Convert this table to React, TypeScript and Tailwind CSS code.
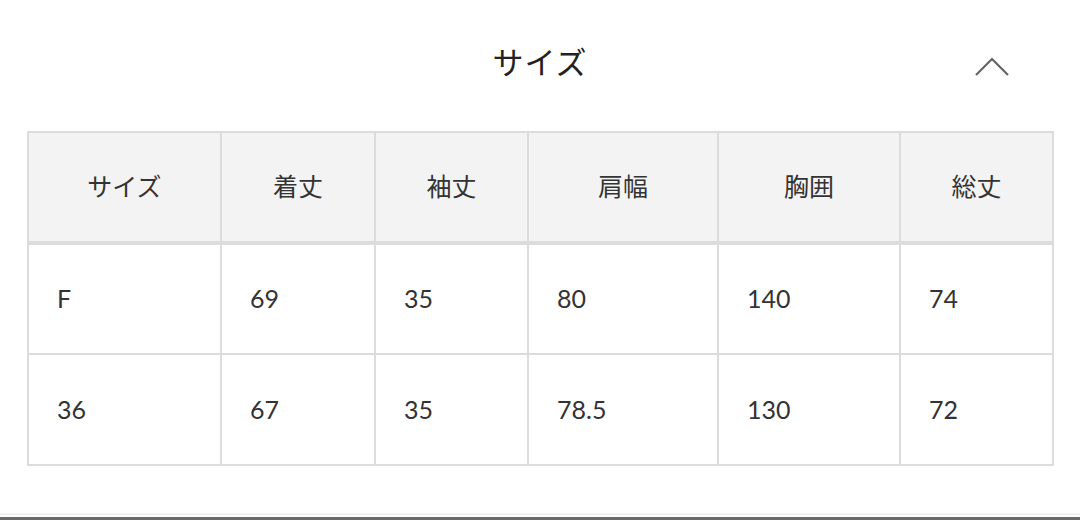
const cols = [
  { label: "サイズ", w: "w-[193px]" },
  { label: "着丈", w: "w-[154px]" },
  { label: "袖丈", w: "w-[153px]" },
  { label: "肩幅", w: "w-[190px]" },
  { label: "胸囲", w: "w-[182px]" },
  { label: "総丈", w: "w-[153px]" },
];

const rows = [
  ["F", "69", "35", "80", "140", "74"],
  ["36", "67", "35", "78.5", "130", "72"],
];

export default function App() {
  return (
    <div
      className="relative h-[520px] w-[1080px] overflow-hidden bg-white text-[#333]"
      style={{ fontFamily: 'Lato, "Noto Sans CJK JP", sans-serif' }}
    >
      {/* accordion header */}
      <div className="relative flex h-[131px] items-start justify-center pt-[42px]">
        <h2 className="text-[31px] leading-[40px] font-normal tracking-[1px] text-[#222]">サイズ</h2>
        <svg
          className="absolute right-[70px] top-[56px]"
          width="36"
          height="22"
          viewBox="0 0 36 22"
          fill="none"
          stroke="#666"
          strokeWidth="2.2"
        >
          <path d="M2 19 L18 3 L34 19" />
        </svg>
      </div>

      {/* size table */}
      <div className="px-[27px]">
        <table className="w-[1025px] table-fixed border-collapse">
          <thead>
            <tr>
              {cols.map((c) => (
                <th
                  key={c.label}
                  className={`${c.w} h-[111px] border-2 border-b-4 border-[#dcdcdc] bg-[#f3f3f3] text-center text-[25px] font-normal text-[#333]`}
                >
                  {c.label}
                </th>
              ))}
            </tr>
          </thead>
          <tbody>
            {rows.map((r, i) => (
              <tr key={i}>
                {r.map((v, j) => (
                  <td
                    key={j}
                    className="h-[111px] border-2 border-[#dcdcdc] pl-[28px] text-left text-[25px] text-[#333]"
                  >
                    {v}
                  </td>
                ))}
              </tr>
            ))}
          </tbody>
        </table>
      </div>

      {/* bottom edge */}
      <div className="absolute bottom-0 left-0 right-0">
        <div className="h-[2px] bg-[#f2f2f2]" />
        <div className="h-[2px] bg-white" />
        <div className="h-[3px] bg-[#6a6a6a]" />
      </div>
    </div>
  );
}
